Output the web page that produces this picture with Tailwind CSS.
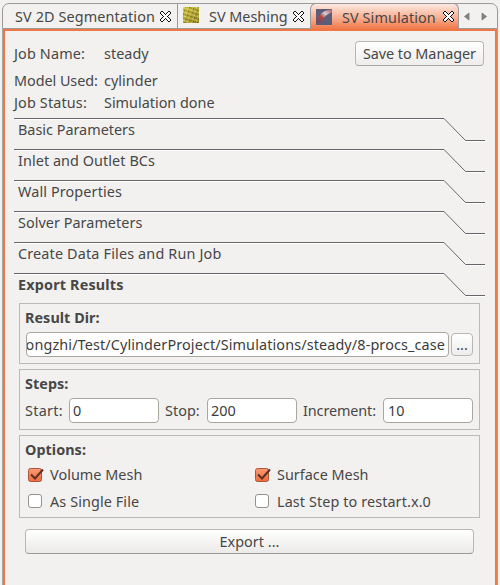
<!DOCTYPE html>
<html lang="en">
<head>
<meta charset="utf-8">
<title>SV Simulation</title>
<script src="https://cdn.jsdelivr.net/npm/@tailwindcss/browser@4"></script>
</head>
<body class="w-[500px] h-[585px] overflow-hidden bg-[#f2f1f0] text-[#474747] font-['Noto_Sans',sans-serif] text-[14.4px] tracking-[0.04px] leading-[20px] whitespace-nowrap">
<svg width="0" height="0" class="absolute">
  <defs>
    <g id="close" shape-rendering="crispEdges">
      <path d="M1 1H4L5.500 3L7 1H10V4L8 5.500L10 7V10H7L5.500 8L4 10H1V7L3 5.500L1 4z" fill="#fff"/>
      <path d="M1 0h2v1h-2zM8 0h2v1h-2zM0 1h1v2h-1zM10 1h1v2h-1zM3 1h1v1h-1zM7 1h1v1h-1zM4 2h1v1h-1zM6 2h1v1h-1zM5 3h1v1h-1zM1 3h1v1h-1zM9 3h1v1h-1zM2 4h1v1h-1zM8 4h1v1h-1zM3 5h1v1h-1zM7 5h1v1h-1zM2 6h1v1h-1zM8 6h1v1h-1zM1 7h1v1h-1zM9 7h1v1h-1zM5 7h1v1h-1zM4 8h1v1h-1zM6 8h1v1h-1zM3 9h1v1h-1zM7 9h1v1h-1zM0 8h1v2h-1zM10 8h1v2h-1zM1 10h2v1h-2zM8 10h2v1h-2z" fill="#111"/>
    </g>
    <g id="fold" fill="none">
      <path d="M0 1.500H430.500L452 23.500H471" stroke="#fff"/>
      <path d="M0 .5H430L451.500 22.500H471" stroke="#66666a"/>
    </g>
    <linearGradient id="orange" x1="0" y1="0" x2="0" y2="1"><stop offset="0" stop-color="#fa9b74"/><stop offset="1" stop-color="#ee6c3c"/></linearGradient>
    <g id="checked">
      <rect x=".5" y="1.500" width="13" height="13" rx="2" fill="url(#orange)" stroke="#ad5538"/>
      <path d="M3 7.500L7 11.500L15 2.500" fill="none" stroke="#5e3023" stroke-width="2"/>
    </g>
    <pattern id="mesh" width="4" height="4" patternUnits="userSpaceOnUse" patternTransform="rotate(18)">
      <rect width="4" height="4" fill="#c3b443"/><rect width="2" height="1" fill="#efe66c"/><rect x="2" y="2" width="1.300" height="1.300" fill="#4f4712"/><rect y="2" width="1" height="1" fill="#8b7c22"/>
    </pattern>
    <linearGradient id="meshshade" x1="0" y1="0" x2="1" y2="1"><stop offset="0" stop-color="#fff45c" stop-opacity=".3"/><stop offset="1" stop-color="#3c3000" stop-opacity=".25"/></linearGradient>
    <linearGradient id="vessel" x1="0" y1="1" x2="1" y2="0"><stop offset="0" stop-color="#5f4a64"/><stop offset=".4" stop-color="#b04848"/><stop offset=".62" stop-color="#d9cfd3"/><stop offset="1" stop-color="#b0505a"/></linearGradient>
  </defs>
</svg>
<div class="flex flex-col h-full">
  <header class="h-[29px] pt-[3px] pl-[2px] pr-[2px]">
    <div class="flex h-[26px] border border-[#9c9a98] rounded-t-[7px]">
      <div class="flex items-center w-[175px] pl-[12px] border-r border-[#9c9a98]">
        <span class="w-[140px] pt-[2px] tracking-[0.12px]">SV 2D Segmentation</span>
        <svg class="ml-[5px] mt-[1px]" width="11" height="11"><use href="#close"/></svg>
      </div>
      <div class="flex items-center w-[132px] pl-[5px]">
        <svg width="16" height="16" class="-mt-[2px]"><rect width="16" height="16" fill="url(#mesh)"/><rect width="16" height="16" fill="url(#meshshade)"/></svg>
        <span class="w-[80px] ml-[10px] pt-[2px] tracking-[0px]">SV Meshing</span>
        <svg class="ml-[4px] mt-[1px]" width="11" height="11"><use href="#close"/></svg>
      </div>
      <div class="flex items-center w-[149px] -mt-px h-[26px] pl-[5px] pt-[1px] border border-b-0 border-[#9c9a98] rounded-t-[6px] bg-linear-to-b from-[#fbe9e1] via-[#f8b498] to-[#f07746]">
        <svg width="16" height="16" class="-mt-[1px]"><rect width="16" height="16" fill="#5b5d79"/><path d="M0 14Q2 5 9 2L16 0V3Q11 5 8 9L5 14z" fill="url(#vessel)"/></svg>
        <span class="w-[94px] ml-[10px] pt-px tracking-[0.1px]">SV Simulation</span>
        <svg class="ml-[7px] -mt-px" width="11" height="11"><use href="#close"/></svg>
      </div>
      <svg width="34" height="24"><path d="M10 9V16L5.500 12.500zM23 9V16L27.500 12.500z" fill="#858381" stroke="#777" stroke-width=".8"/></svg>
    </div>
  </header>
  <main class="flex-1 mx-[2px] border-x border-[#a5a3a6]">
    <div class="h-full border-x-2 border-t-2 border-[#f07746] pl-[9px]">
      <section class="h-[87px] pt-[8px] w-[471px]">
        <div class="flex h-[30px] items-center">
          <span class="w-[90px] tracking-[0.15px]">Job Name:</span><span class="flex-1">steady</span>
          <button class="w-[129px] h-[25px] mr-[1px] -mt-[2px] border border-[#b9b6b3] border-b-[#aaa7a3] rounded-[4px] bg-linear-to-b from-white to-[#eeedec] leading-[23px] text-center tracking-[-0.05px]">Save to Manager</button>
        </div>
        <div class="flex h-[24px] items-center"><span class="w-[90px] tracking-[-0.05px]">Model Used:</span><span>cylinder</span></div>
        <div class="flex h-[20px] items-center"><span class="w-[90px] tracking-[0.15px]">Job Status:</span><span class="tracking-[0px]">Simulation done</span></div>
      </section>
      <nav class="flex flex-col w-[471px]">
        <div class="grid h-[31px]"><svg class="col-start-1 row-start-1" width="471" height="24"><use href="#fold"/></svg><span class="col-start-1 row-start-1 pl-[4px] pt-[2px] tracking-[0px]">Basic Parameters</span></div>
        <div class="grid h-[31px]"><svg class="col-start-1 row-start-1" width="471" height="24"><use href="#fold"/></svg><span class="col-start-1 row-start-1 pl-[4px] pt-[2px] tracking-[0.07px]">Inlet and Outlet BCs</span></div>
        <div class="grid h-[31px]"><svg class="col-start-1 row-start-1" width="471" height="24"><use href="#fold"/></svg><span class="col-start-1 row-start-1 pl-[4px] pt-[2px] tracking-[0.12px]">Wall Properties</span></div>
        <div class="grid h-[31px]"><svg class="col-start-1 row-start-1" width="471" height="24"><use href="#fold"/></svg><span class="col-start-1 row-start-1 pl-[4px] pt-[2px]">Solver Parameters</span></div>
        <div class="grid h-[31px]"><svg class="col-start-1 row-start-1" width="471" height="24"><use href="#fold"/></svg><span class="col-start-1 row-start-1 pl-[4px] pt-[2px] tracking-[0.16px]">Create Data Files and Run Job</span></div>
        <div class="grid h-[30px]"><svg class="col-start-1 row-start-1" width="471" height="24"><use href="#fold"/></svg><span class="col-start-1 row-start-1 pl-[4px] pt-[2px] font-bold tracking-[0.17px]">Export Results</span></div>
      </nav>
      <div class="flex flex-col gap-[5px] ml-[5px] w-[461px]">
        <section class="h-[61px] border border-[#bcbab8] px-[5px] pt-[4px]">
          <h2 class="font-bold">Result Dir:</h2>
          <div class="flex items-center mt-[4px] gap-[2px] pl-[1px]">
            <div class="flex justify-end w-[423px] h-[25px] border border-[#aaa7a1] rounded-[4px] bg-white overflow-hidden text-[#3c3c3c] leading-[23px] pr-[3px] tracking-[0.12px]">ongzhi/Test/CylinderProject/Simulations/steady/8-procs_case</div>
            <button class="w-[22px] h-[23px] border border-[#b9b6b3] rounded-[4px] bg-linear-to-b from-white to-[#eeedec] leading-[20px] text-center">...</button>
          </div>
        </section>
        <section class="h-[61px] border border-[#bcbab8] px-[5px] pt-[4px]">
          <h2 class="font-bold">Steps:</h2>
          <div class="flex items-center mt-[4px]">
            <span class="w-[44px] tracking-[0.3px]">Start:</span><div class="w-[90px] h-[25px] border border-[#aaa7a1] rounded-[4px] bg-white text-[#3c3c3c] leading-[23px] pl-[3px]">0</div>
            <span class="w-[42px] ml-[6px]">Stop:</span><div class="w-[90px] h-[25px] border border-[#aaa7a1] rounded-[4px] bg-white text-[#3c3c3c] leading-[23px] pl-[3px]">200</div>
            <span class="w-[80px] ml-[6px] tracking-[-0.1px]">Increment:</span><div class="w-[90px] h-[25px] border border-[#aaa7a1] rounded-[4px] bg-white text-[#3c3c3c] leading-[23px] pl-[4px]">10</div>
          </div>
        </section>
        <section class="h-[83px] border border-[#bcbab8] px-[5px] pt-[4px]">
          <h2 class="font-bold">Options:</h2>
          <div class="grid grid-cols-[227px_1fr] auto-rows-[27px] items-center mt-[1px] pl-[3px]">
            <label class="flex items-center"><svg width="16" height="16"><use href="#checked"/></svg><span class="ml-[6px]">Volume Mesh</span></label>
            <label class="flex items-center"><svg width="16" height="16"><use href="#checked"/></svg><span class="ml-[6px] tracking-[0px]">Surface Mesh</span></label>
            <label class="flex items-center"><i class="w-[14px] h-[14px] -mt-[2px] border border-[#94918e] rounded-[3px] bg-white"></i><span class="ml-[8px] tracking-[0.1px]">As Single File</span></label>
            <label class="flex items-center"><i class="w-[14px] h-[14px] -mt-[2px] border border-[#94918e] rounded-[3px] bg-white"></i><span class="ml-[8px] tracking-[0.1px]">Last Step to restart.x.0</span></label>
          </div>
        </section>
      </div>
      <button class="block mt-[11px] ml-[11px] w-[449px] h-[25px] border border-[#b9b6b3] border-b-[#9c9a96] rounded-[4px] bg-linear-to-b from-white to-[#ebeae8] leading-[23px] text-center">Export ...</button>
    </div>
  </main>
</div>
</body>
</html>
